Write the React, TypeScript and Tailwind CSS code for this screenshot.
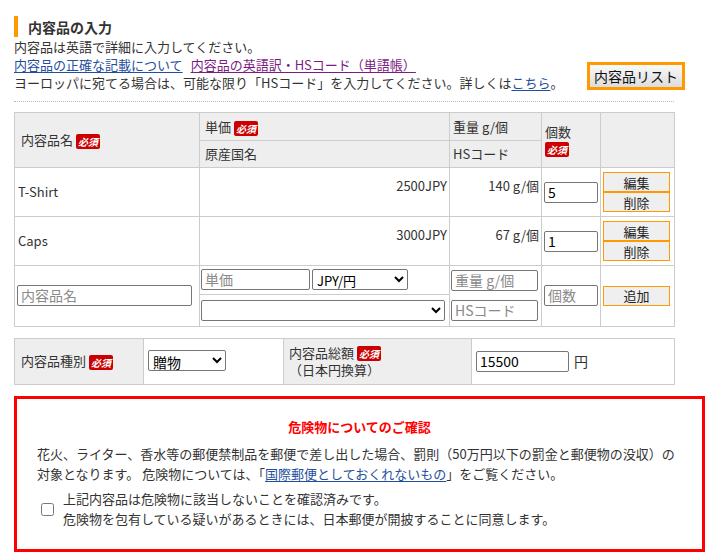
import React from 'react';

function Badge() {
  return (
    <span className="inline-block bg-[#cc0000] text-white text-[10px] font-bold italic leading-[11px] px-[2px] py-[2px] rounded-[2px] align-middle">
      必須
    </span>
  );
}

const inputCls =
  'border border-[#767676] rounded-[2px] bg-white px-[3px] text-[14px] text-black placeholder:text-[#8a8a8a] h-[21px]';
const selectCls =
  'border border-[#767676] rounded-[2px] bg-white text-[13px] text-black h-[21px]';

function ActionButton({ label }: { label: string }) {
  return (
    <button className="w-[67px] h-[20px] border border-[#ff9900] bg-[#efefef] text-[13px] leading-none text-[#222]">
      {label}
    </button>
  );
}

const items = [
  { name: 'T-Shirt', price: '2500JPY', weight: '140 g/個', qty: '5' },
  { name: 'Caps', price: '3000JPY', weight: '67 g/個', qty: '1' },
];

export default function App() {
  return (
    <div className="pl-[14px] pt-[16px] text-[13px] text-[#333] font-['Noto_Sans_CJK_JP','Noto_Sans',sans-serif] bg-white min-h-[557px]">
      {/* heading */}
      <div className="flex items-center h-[21px]">
        <div className="w-[4px] h-[21px] bg-[#ff9900]" />
        <h2 className="ml-[10px] text-[14px] font-bold text-[#333] leading-none">内容品の入力</h2>
      </div>

      <div className="w-[660px] mt-[1px]">
        <div className="flex items-end justify-between">
          <div className="leading-[18px]">
            <p>内容品は英語で詳細に入力してください。</p>
            <p>
              <a className="text-[#1f4f9e] underline underline-offset-2">内容品の正確な記載について</a>
              <span className="ml-[8px]" />
              <a className="text-[#7b1b83] underline underline-offset-2">内容品の英語訳・HSコード（単語帳）</a>
            </p>
            <p>
              ヨーロッパに宛てる場合は、可能な限り「HSコード」を入力してください。詳しくは
              <a className="text-[#1f4f9e] underline underline-offset-2">こちら</a>。
            </p>
          </div>
          <button className="mr-[-11px] mb-[2px] w-[98px] h-[28px] border-[3px] border-[#ff9900] bg-gradient-to-b from-[#fafafa] to-[#dcdcdc] text-[14px] text-[#111] leading-none">
            内容品リスト
          </button>
        </div>
        <div className="mt-[9px] border-t border-dotted border-[#bbbbbb]" />

        {/* items table */}
        <table className="mt-[10px] w-[660px] table-fixed border-collapse border border-[#cccccc]">
          <colgroup>
            <col className="w-[185px]" />
            <col className="w-[250px]" />
            <col className="w-[92px]" />
            <col className="w-[59px]" />
            <col className="w-[74px]" />
          </colgroup>
          <thead className="bg-[#eeeeee]">
            <tr className="h-[28px]">
              <th rowSpan={2} className="border border-[#cccccc] font-normal text-left pl-[6px] align-middle">
                内容品名 <Badge />
              </th>
              <th className="border border-[#cccccc] font-normal text-left pl-[5px]">
                単価 <Badge />
              </th>
              <th className="border border-[#cccccc] font-normal text-left pl-[3px]">重量 g/個</th>
              <th rowSpan={2} className="border border-[#cccccc] font-normal text-left pl-[3px] leading-[17px]">
                個数
                <br />
                <Badge />
              </th>
              <th rowSpan={2} className="border border-[#cccccc]" />
            </tr>
            <tr className="h-[27px]">
              <th className="border border-[#cccccc] font-normal text-left pl-[5px]">原産国名</th>
              <th className="border border-[#cccccc] font-normal text-left pl-[3px]">HSコード</th>
            </tr>
          </thead>
          <tbody>
            {items.map((it) => (
              <tr key={it.name} className="h-[49px]">
                <td className="border border-[#cccccc] pl-[3px] align-middle">{it.name}</td>
                <td className="border border-[#cccccc] text-right pr-[2px] pt-[8px] align-top">{it.price}</td>
                <td className="border border-[#cccccc] text-right pr-[2px] pt-[8px] align-top">{it.weight}</td>
                <td className="border border-[#cccccc] pl-[2px] align-middle">
                  <input className={inputCls + ' w-[54px]'} defaultValue={it.qty} />
                </td>
                <td className="border border-[#cccccc] pl-[2px] align-middle">
                  <div className="flex flex-col">
                    <ActionButton label="編集" />
                    <ActionButton label="削除" />
                  </div>
                </td>
              </tr>
            ))}
            <tr className="h-[60px]">
              <td className="border border-[#cccccc] pl-[2px] align-middle">
                <input className={inputCls + ' w-[175px]'} placeholder="内容品名" />
              </td>
              <td className="border border-[#cccccc] p-0 align-middle">
                <div className="flex flex-col">
                  <div className="flex gap-[2px] px-[1px] pt-[3px] pb-[4px] border-b border-[#cccccc]">
                    <input className={inputCls + ' w-[109px]'} placeholder="単価" />
                    <select className={selectCls + ' w-[96px]'} defaultValue="JPY">
                      <option value="JPY">JPY/円</option>
                    </select>
                  </div>
                  <div className="px-[1px] pt-[5px] pb-[4px]">
                    <select className={selectCls + ' w-[244px]'} defaultValue="">
                      <option value=""></option>
                    </select>
                  </div>
                </div>
              </td>
              <td className="border border-[#cccccc] pl-[1px] align-middle">
                <div className="flex flex-col gap-[9px]">
                  <input className={inputCls + ' w-[87px]'} placeholder="重量 g/個" />
                  <input className={inputCls + ' w-[87px]'} placeholder="HSコード" />
                </div>
              </td>
              <td className="border border-[#cccccc] pl-[2px] align-middle">
                <input className={inputCls + ' w-[54px]'} placeholder="個数" />
              </td>
              <td className="border border-[#cccccc] pl-[2px] align-middle">
                <ActionButton label="追加" />
              </td>
            </tr>
          </tbody>
        </table>

        {/* type / total table */}
        <table className="mt-[11px] w-[660px] table-fixed border-collapse border border-[#cccccc]">
          <colgroup>
            <col className="w-[129px]" />
            <col className="w-[140px]" />
            <col className="w-[188px]" />
            <col className="w-[203px]" />
          </colgroup>
          <tbody>
            <tr className="h-[46px]">
              <td className="border border-[#cccccc] bg-[#eeeeee] pl-[6px]">
                内容品種別 <Badge />
              </td>
              <td className="border border-[#cccccc] pl-[4px]">
                <select className={selectCls + ' w-[78px] text-[14px]'} defaultValue="gift">
                  <option value="gift">贈物</option>
                </select>
              </td>
              <td className="border border-[#cccccc] bg-[#eeeeee] pl-[5px] leading-[17px]">
                内容品総額 <Badge />
                <br />
                （日本円換算）
              </td>
              <td className="border border-[#cccccc] pl-[4px]">
                <div className="flex items-center gap-[5px]">
                  <input className={inputCls + ' w-[93px]'} defaultValue="15500" />
                  <span className="text-[14px]">円</span>
                </div>
              </td>
            </tr>
          </tbody>
        </table>
      </div>

      {/* danger goods */}
      <div className="mt-[11px] w-[691px] h-[156px] border-[3px] border-[#ff0000] px-[20px] pt-[18px]">
        <p className="text-center text-[#ff0000] font-bold">危険物についてのご確認</p>
        <p className="mt-[8px] leading-[20px] text-[13px]">
          花火、ライター、香水等の郵便禁制品を郵便で差し出した場合、罰則（50万円以下の罰金と郵便物の没収）の
          <br />
          対象となります。 危険物については、「
          <a className="text-[#1f4f9e] underline underline-offset-2">国際郵便としておくれないもの</a>
          」をご覧ください。
        </p>
        <label className="mt-[5px] flex items-center gap-[9px] pl-[4px] leading-[20px] text-[13px]">
          <input type="checkbox" className="w-[13px] h-[13px] m-0" />
          <span>
            上記内容品は危険物に該当しないことを確認済みです。
            <br />
            危険物を包有している疑いがあるときには、日本郵便が開披することに同意します。
          </span>
        </label>
      </div>
    </div>
  );
}
